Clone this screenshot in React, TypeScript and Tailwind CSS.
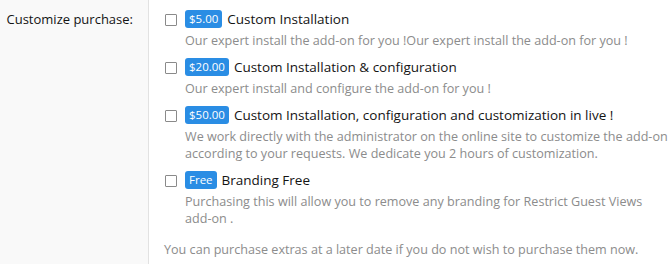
const extras = [
  {
    id: 1,
    price: '$5.00',
    title: 'Custom Installation',
    lines: ['Our expert install the add-on for you !Our expert install the add-on for you !'],
  },
  {
    id: 2,
    price: '$20.00',
    title: 'Custom Installation & configuration',
    lines: ['Our expert install and configure the add-on for you !'],
  },
  {
    id: 3,
    price: '$50.00',
    title: 'Custom Installation, configuration and customization in live !',
    lines: [
      'We work directly with the administrator on the online site to customize the add-on',
      'according to your requests. We dedicate you 2 hours of customization.',
    ],
  },
  {
    id: 4,
    price: 'Free',
    title: 'Branding Free',
    lines: ['Purchasing this will allow you to remove any branding for Restrict Guest Views', 'add-on .'],
  },
]

export default function App() {
  return (
    <div className="flex w-[670px] h-[264px] bg-white font-['Open_Sans','Noto_Sans',sans-serif] text-[#141414] overflow-hidden">
      <div className="w-[149px] shrink-0 bg-[#f9f9f9] border-r border-[#e2e2e2] pt-[8px] pr-[15px] text-right text-[13px] leading-[22px] whitespace-nowrap">
        Customize purchase:
      </div>
      <div className="flex-1 pl-[16px] pt-[8px]">
        <ul className="flex flex-col gap-[7px]">
          {extras.map((item) => (
            <li key={item.id} className="flex gap-[8px]">
              <span className="mt-[6px] w-[12px] h-[12px] shrink-0 border border-[#8a8a8a] rounded-[1px] bg-white" />
              <div>
                <div className="flex items-center h-[22px] text-[13.5px]">
                  <span className="inline-flex items-center h-[18px] px-[4px] rounded-[3px] bg-[#2a8de4] text-white text-[11.5px]">
                    {item.price}
                  </span>
                  <span className="ml-[5px] whitespace-nowrap">{item.title}</span>
                </div>
                <div className="mt-[2px] text-[12.6px] leading-[17px] text-[#8c8c8c]">
                  {item.lines.map((line) => (
                    <div key={line} className="whitespace-nowrap">{line}</div>
                  ))}
                </div>
              </div>
            </li>
          ))}
        </ul>
        <p className="mt-[14px] -ml-[1px] text-[12.6px] leading-[17px] text-[#8c8c8c] whitespace-nowrap">
          You can purchase extras at a later date if you do not wish to purchase them now.
        </p>
      </div>
    </div>
  )
}
